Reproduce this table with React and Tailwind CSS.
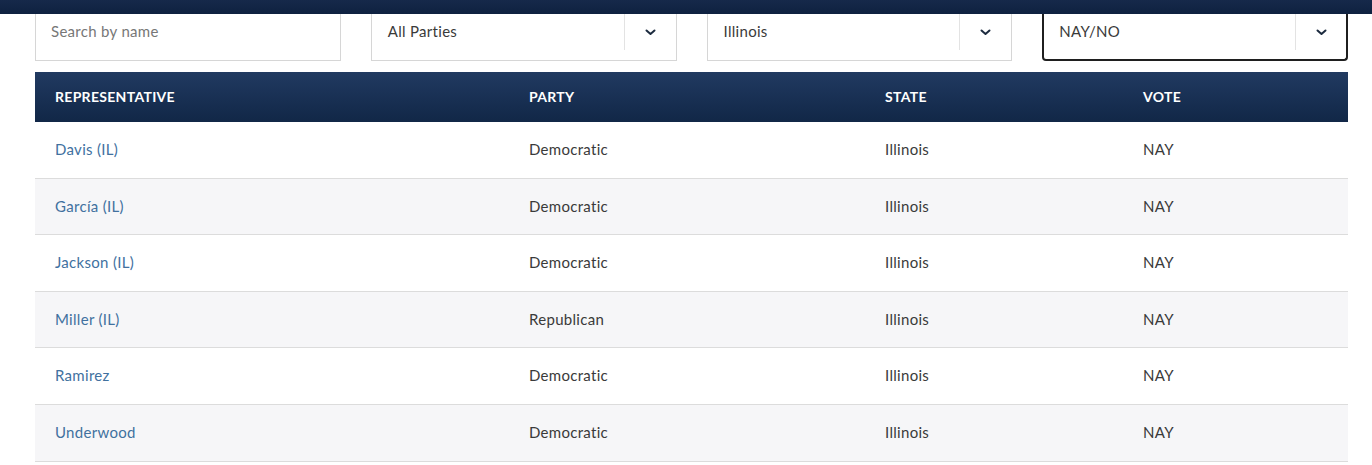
const rows = [
  { name: 'Davis (IL)', party: 'Democratic' },
  { name: 'García (IL)', party: 'Democratic' },
  { name: 'Jackson (IL)', party: 'Democratic' },
  { name: 'Miller (IL)', party: 'Republican' },
  { name: 'Ramirez', party: 'Democratic' },
  { name: 'Underwood', party: 'Democratic' },
]

function Chevron() {
  return (
    <svg width="11" height="7" viewBox="0 0 11 7" fill="none">
      <path d="M1.5 1.5L5.5 5L9.5 1.5" stroke="#1c2b3f" strokeWidth="2" strokeLinecap="round" strokeLinejoin="round" />
    </svg>
  )
}

function SelectBox({ label, active }) {
  return (
    <div
      className={
        'flex h-[47px] items-start bg-white ' +
        (active
          ? 'border-x-2 border-b-2 border-[#1f1f1f] rounded-b-[4px]'
          : 'border-x border-b border-[#d6d6d6]')
      }
    >
      <span className={'flex-1 pt-[6px] text-[15px] leading-[22px] tracking-[0.3px] text-[#3a3a3a] ' + (active ? 'pl-[15px]' : 'pl-4')}>
        {label}
      </span>
      <div className="h-[36px] w-px bg-[#e3e3e3]" />
      <div className={'flex h-[36px] items-center justify-center ' + (active ? 'w-[50px]' : 'w-[51px]')}>
        <Chevron />
      </div>
    </div>
  )
}

export default function App() {
  return (
    <div className="h-[465px] w-[1372px] overflow-hidden bg-white" style={{ fontFamily: 'Lato, "Noto Sans", sans-serif' }}>
      {/* top bar */}
      <div className="h-[14px] bg-gradient-to-b from-[#16294a] to-[#0e2140]" />

      {/* filters */}
      <div className="ml-[35px] grid w-[1313px] grid-cols-4 gap-[30px]">
        <div className="flex h-[47px] items-start border-x border-b border-[#d6d6d6] bg-white pl-[15px] pt-[6px]">
          <span className="text-[15px] leading-[22px] tracking-[0.3px] text-[#777]">Search by name</span>
        </div>
        <SelectBox label="All Parties" />
        <SelectBox label="Illinois" />
        <SelectBox label="NAY/NO" active />
      </div>

      {/* table */}
      <div className="ml-[35px] mt-[11px] w-[1313px]">
        <div className="flex h-[50px] items-center bg-gradient-to-b from-[#213a61] to-[#112747] pb-[1px] text-[14px] font-bold uppercase tracking-[0.3px] text-white">
          <div className="w-[474px] pl-5">Representative</div>
          <div className="w-[356px] pl-5">Party</div>
          <div className="w-[258px] pl-5">State</div>
          <div className="flex-1 pl-5">Vote</div>
        </div>
        {rows.map((r, i) => (
          <div
            key={r.name}
            className={
              'flex h-[56.6px] items-center border-b border-[#dcdcdc] pb-[1px] text-[15px] tracking-[0.3px] text-[#3a3a3a] ' +
              (i % 2 ? 'bg-[#f6f6f8]' : 'bg-white')
            }
          >
            <div className="w-[474px] pl-5 text-[#41719f]">{r.name}</div>
            <div className="w-[356px] pl-5">{r.party}</div>
            <div className="w-[258px] pl-5">Illinois</div>
            <div className="flex-1 pl-5">NAY</div>
          </div>
        ))}
      </div>
    </div>
  )
}
